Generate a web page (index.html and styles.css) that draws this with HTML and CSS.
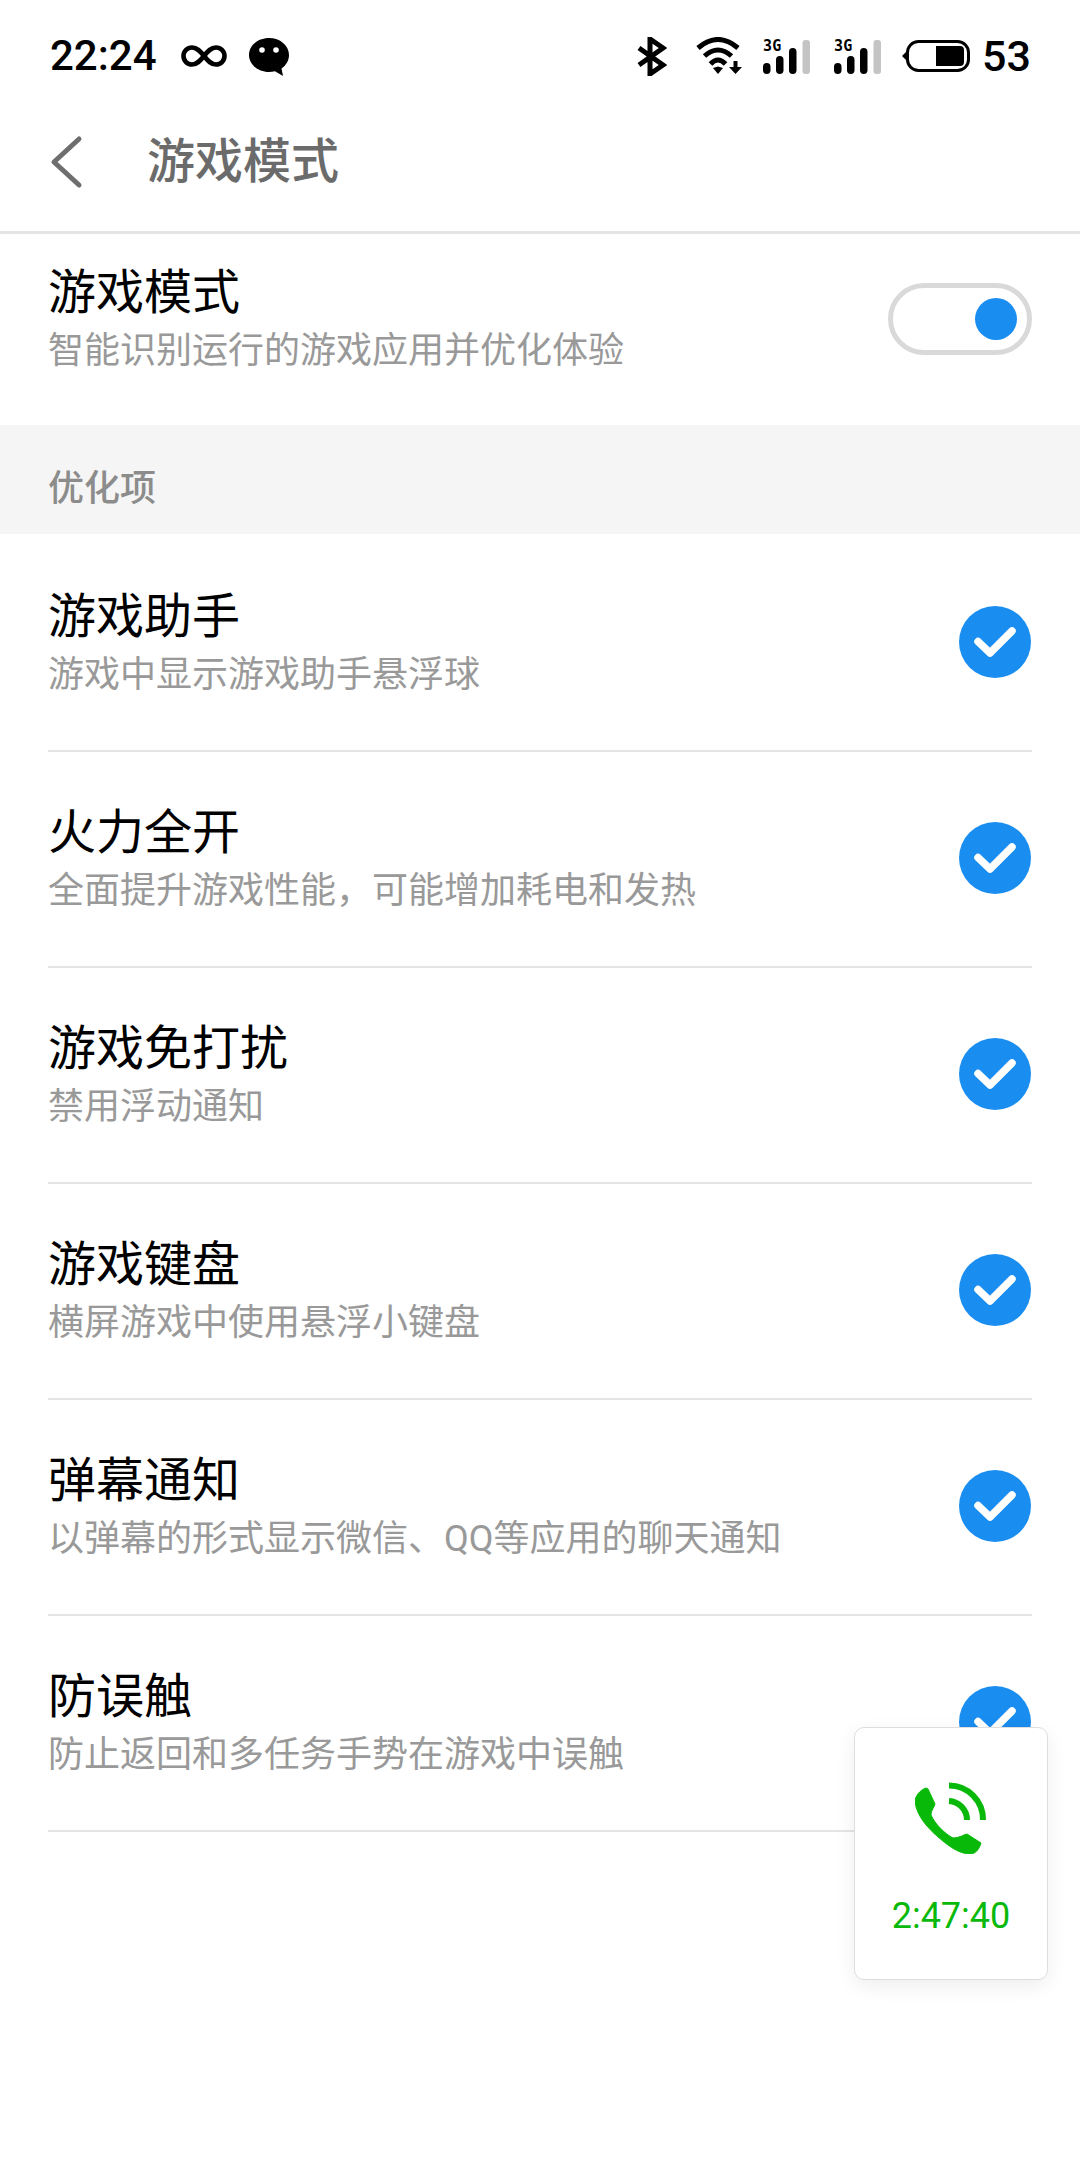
FILE: index.html
```html
<!DOCTYPE html>
<html lang="zh-CN">
<head>
<meta charset="utf-8">
<title>游戏模式</title>
<link rel="stylesheet" href="styles.css">
</head>
<body>
<div class="screen">
  <header class="status">
    <div class="status-left">
      <span class="clock">22:24</span>
      <svg class="ic-inf" viewBox="0 0 48 24"><path d="M24 12c-4-5-7-8.500-12-8.500a8.500 8.500 0 0 0 0 17c5 0 8-3.500 12-8.500s7-8.500 12-8.500a8.500 8.500 0 0 1 0 17c-5 0-8-3.500-12-8.500z" fill="none" stroke="#000" stroke-width="4.600"/></svg>
      <svg class="ic-chat" viewBox="0 0 40 38"><path d="M20 0C9 0 0 7.500 0 17c0 9.500 9 17 20 17 2 0 4-.3 6-.8L34 38l-1.500-7.500C37 27.500 40 22.500 40 17 40 7.500 31 0 20 0z" fill="#000"/><circle cx="13" cy="12" r="2.800" fill="#fff"/><circle cx="27" cy="12" r="2.800" fill="#fff"/></svg>
    </div>
    <div class="status-right">
      <svg class="ic-bt" viewBox="0 0 30 39"><path d="M2 11l24 17-13 9V2l13 9L2 28" fill="none" stroke="#000" stroke-width="5"/></svg>
      <svg class="ic-wifi" viewBox="0 0 46 38"><path d="M2 11Q22-6 42 11" fill="none" stroke="#000" stroke-width="5"/><path d="M8.500 19Q22 7 35.500 19" fill="none" stroke="#000" stroke-width="5"/><path d="M14.500 27Q22 19 29.500 27" fill="none" stroke="#000" stroke-width="5"/><path d="M17 31l5-1.500 5 1.500-5 6z" fill="#000"/><path d="M33 30h13l-6.500 7z M37.500 24h4v7h-4z" fill="#000"/></svg>
      <span class="sig">
        <span class="sig-label">3G</span>
        <svg class="ic-bars" viewBox="0 0 47 34"><rect x="0" y="23" width="7.500" height="11" rx="3.700"/><rect x="13" y="16" width="7.500" height="18" rx="3.700"/><rect x="26" y="8" width="7.500" height="26" rx="3.700"/><rect x="39.500" y="0" width="7.500" height="34" rx="3" fill="#c4c4c4"/></svg>
      </span>
      <span class="sig sig-last">
        <span class="sig-label">3G</span>
        <svg class="ic-bars" viewBox="0 0 47 34"><rect x="0" y="23" width="7.500" height="11" rx="3.700"/><rect x="13" y="16" width="7.500" height="18" rx="3.700"/><rect x="26" y="8" width="7.500" height="26" rx="3.700"/><rect x="39.500" y="0" width="7.500" height="34" rx="3" fill="#c4c4c4"/></svg>
      </span>
      <svg class="ic-batt" viewBox="0 0 68 32"><path d="M0 16l5-5v10z" fill="#000"/><rect x="5.500" y="1.500" width="61" height="29" rx="11" fill="none" stroke="#000" stroke-width="3"/><path d="M34 6h24a4 4 0 0 1 4 4v12a4 4 0 0 1-4 4H34z" fill="#000"/></svg>
      <span class="pct">53</span>
    </div>
  </header>

  <nav class="toolbar">
    <svg class="ic-back" viewBox="0 0 34 54"><path d="M30 4L5 27l25 23" fill="none" stroke="#6e6e6e" stroke-width="5" stroke-linecap="round" stroke-linejoin="round"/></svg>
    <h1 class="page-title">游戏模式</h1>
  </nav>

  <section class="row row-master">
    <div class="row-text">
      <div class="row-title">游戏模式</div>
      <div class="row-sub">智能识别运行的游戏应用并优化体验</div>
    </div>
    <span class="toggle"><span class="knob"></span></span>
  </section>

  <div class="section-head">优化项</div>

  <section class="list">
    <div class="row item"><div class="row-text"><div class="row-title">游戏助手</div><div class="row-sub">游戏中显示游戏助手悬浮球</div></div><svg class="check" viewBox="0 0 72 72"><circle cx="36" cy="36" r="36" fill="#1a8df0"/><path d="M19 35.500l12 11.500L53 25" fill="none" stroke="#fff" stroke-width="7.500" stroke-linecap="round" stroke-linejoin="round"/></svg></div>
    <div class="row item"><div class="row-text"><div class="row-title">火力全开</div><div class="row-sub">全面提升游戏性能，可能增加耗电和发热</div></div><svg class="check" viewBox="0 0 72 72"><circle cx="36" cy="36" r="36" fill="#1a8df0"/><path d="M19 35.500l12 11.500L53 25" fill="none" stroke="#fff" stroke-width="7.500" stroke-linecap="round" stroke-linejoin="round"/></svg></div>
    <div class="row item"><div class="row-text"><div class="row-title">游戏免打扰</div><div class="row-sub">禁用浮动通知</div></div><svg class="check" viewBox="0 0 72 72"><circle cx="36" cy="36" r="36" fill="#1a8df0"/><path d="M19 35.500l12 11.500L53 25" fill="none" stroke="#fff" stroke-width="7.500" stroke-linecap="round" stroke-linejoin="round"/></svg></div>
    <div class="row item"><div class="row-text"><div class="row-title">游戏键盘</div><div class="row-sub">横屏游戏中使用悬浮小键盘</div></div><svg class="check" viewBox="0 0 72 72"><circle cx="36" cy="36" r="36" fill="#1a8df0"/><path d="M19 35.500l12 11.500L53 25" fill="none" stroke="#fff" stroke-width="7.500" stroke-linecap="round" stroke-linejoin="round"/></svg></div>
    <div class="row item"><div class="row-text"><div class="row-title">弹幕通知</div><div class="row-sub">以弹幕的形式显示微信、QQ等应用的聊天通知</div></div><svg class="check" viewBox="0 0 72 72"><circle cx="36" cy="36" r="36" fill="#1a8df0"/><path d="M19 35.500l12 11.500L53 25" fill="none" stroke="#fff" stroke-width="7.500" stroke-linecap="round" stroke-linejoin="round"/></svg></div>
    <div class="row item"><div class="row-text"><div class="row-title">防误触</div><div class="row-sub">防止返回和多任务手势在游戏中误触</div></div><svg class="check" viewBox="0 0 72 72"><circle cx="36" cy="36" r="36" fill="#1a8df0"/><path d="M19 35.500l12 11.500L53 25" fill="none" stroke="#fff" stroke-width="7.500" stroke-linecap="round" stroke-linejoin="round"/></svg></div>
  </section>

  <aside class="call-card">
    <svg class="ic-phone" viewBox="0 0 72 72"><path d="M11 6C5 8 0 14 0 20 2 35 14 47 22 54 32 63 44 72 55 72 60 72 64 68 66 61L52 52C48 53 44 56 38 56 30 52 20 42 16 33 16 28 19 26 20 22L13 7z" fill="#09b909" stroke="#09b909" stroke-width="1" stroke-linejoin="round"/><path d="M34 19A19 19 0 0 1 52 38" fill="none" stroke="#09b909" stroke-width="6"/><path d="M34 3.500A34 34 0 0 1 68 38" fill="none" stroke="#09b909" stroke-width="6"/></svg>
    <span class="call-time">2:47:40</span>
  </aside>
</div>
</body>
</html>
```
FILE: styles.css
```css
* { box-sizing: border-box; margin: 0; padding: 0; }
html, body { background: #fff; }
body { font-family: Roboto, "Noto Sans CJK SC", sans-serif; color: #000; }
.screen { position: relative; width: 1080px; height: 2160px; overflow: hidden; background: #fff; }

.status { height: 92px; display: flex; justify-content: space-between; align-items: center; padding: 20px 49px 0 50px; }
.status-left, .status-right { display: flex; align-items: center; }
.clock { font: 500 42px/1 Roboto, sans-serif; width: 105px; }
.ic-inf { width: 48px; height: 24px; margin-left: 25px; }
.ic-chat { width: 40px; height: 38px; margin-left: 21px; margin-top: 2px; }
.ic-bt { width: 30px; height: 39px; margin-right: 29px; }
.ic-wifi { width: 46px; height: 38px; margin-right: 21px; }
.sig { position: relative; display: block; width: 47px; height: 34px; margin-right: 24px; margin-top: 2px; }
.sig-last { margin-right: 21px; }
.sig-label { position: absolute; left: 0; top: -1px; font: 700 15px/1 "DejaVu Sans Mono", monospace; }
.ic-bars { display: block; width: 47px; height: 34px; }
.ic-batt { width: 68px; height: 32px; margin-right: 12px; }
.pct { font: 500 43px/1 Roboto, sans-serif; }

.toolbar { height: 142px; border-bottom: 3px solid #e4e4e4; display: flex; align-items: center; padding: 0 0 0 49px; }
.ic-back { width: 34px; height: 54px; flex: none; margin-right: 64px; }
.page-title { font-size: 48px; font-weight: 500; color: #6b6b6b; line-height: 1; }

.row { display: flex; align-items: center; justify-content: space-between; }
.row-master { height: 191px; padding: 0 48px 22px 48px; }
.row-title { font-size: 48px; line-height: 64px; color: #000; }
.row-sub { font-size: 36px; line-height: 52px; color: #999; }
.toggle { position: relative; display: block; width: 144px; height: 72px; border: 5px solid #d9d9d9; border-radius: 36px; flex: none; }
.knob { position: absolute; right: 10px; top: 10px; width: 42px; height: 42px; border-radius: 50%; background: #1a8df0; }

.section-head { height: 109px; background: #f5f5f5; display: flex; align-items: center; padding: 10px 0 0 48px; font-size: 36px; font-weight: 500; color: #8c8c8c; }

.list { padding: 2px 48px 0; }
.item { height: 216px; border-bottom: 2px solid #e4e4e4; }
.check { width: 72px; height: 72px; flex: none; margin: 0 1px 2px 0; }

.call-card { position: absolute; left: 854px; top: 1727px; width: 194px; height: 253px; background: #fff; border: 1.500px solid #dedede; border-radius: 10px; box-shadow: 0 6px 20px rgba(0,0,0,.07); display: flex; flex-direction: column; align-items: center; }
.ic-phone { width: 72px; height: 72px; margin-top: 54px; }
.call-time { margin-top: 44px; font: 400 36px/1 Roboto, sans-serif; color: #09b909; }
```
